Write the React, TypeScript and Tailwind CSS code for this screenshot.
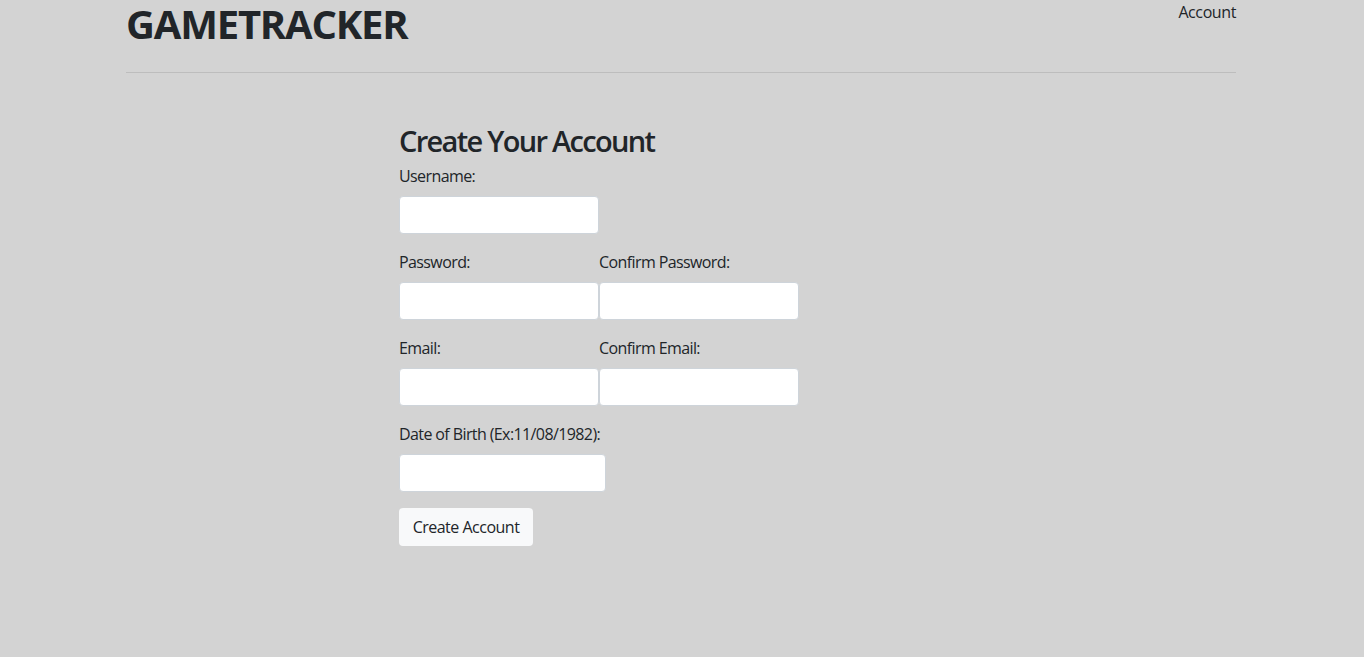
import React from "react";

const Field = ({ label, className = "w-[200px]" }: { label: string; className?: string }) => (
  <div className="flex flex-col">
    <label className="text-[16px] leading-[24px] tracking-[-0.6px]">{label}</label>
    <input
      type="text"
      className={`mt-[8px] h-[38px] ${className} bg-white border border-[#ced4da] rounded-[4px] outline-none`}
    />
  </div>
);

export default function App() {
  return (
    <div
      className="min-h-[657px] bg-[#d3d3d3] text-[#212529]"
      style={{ fontFamily: '"Open Sans", "Noto Sans", sans-serif' }}
    >
      <div className="w-[1110px] ml-[126px]">
        {/* Header */}
        <div className="flex justify-between items-start">
          <h1 className="text-[40px] leading-[56px] -mt-[4px] mb-[4px] font-bold tracking-[-1.2px]">GAMETRACKER</h1>
          <a className="text-[16px] leading-[24px] tracking-[-0.4px]">Account</a>
        </div>
        <hr className="mt-[16px] border-t border-[rgba(0,0,0,0.1)]" />

        {/* Form */}
        <div className="ml-[273px] mt-[49px]">
          <h2 className="text-[29px] leading-[38px] font-semibold tracking-[-1.7px]">Create Your Account</h2>
          <div className="mt-[4px]">
            <Field label="Username:" />
          </div>
          <div className="mt-[16px] flex">
            <Field label="Password:" />
            <Field label="Confirm Password:" />
          </div>
          <div className="mt-[16px] flex">
            <Field label="Email:" />
            <Field label="Confirm Email:" />
          </div>
          <div className="mt-[16px]">
            <Field label="Date of Birth (Ex:11/08/1982):" className="w-[207px]" />
          </div>
          <button className="mt-[16px] h-[38px] w-[134px] bg-[#f8f9fa] rounded-[4px] text-[16px] tracking-[-0.5px]">
            Create Account
          </button>
        </div>
      </div>
    </div>
  );
}
